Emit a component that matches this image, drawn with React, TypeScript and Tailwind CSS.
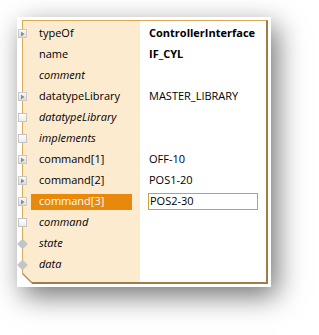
import React from "react";

type Icon = "expand" | "box" | "diamond" | "none";

type Row = {
  label: string;
  value?: string;
  icon: Icon;
  italic?: boolean;
  bold?: boolean;
  selected?: boolean;
};

const ROWS: Row[] = [
  { label: "typeOf", value: "ControllerInterface", icon: "expand", bold: true },
  { label: "name", value: "IF_CYL", icon: "none", bold: true },
  { label: "comment", icon: "none", italic: true },
  { label: "datatypeLibrary", value: "MASTER_LIBRARY", icon: "expand" },
  { label: "datatypeLibrary", icon: "box", italic: true },
  { label: "implements", icon: "box", italic: true },
  { label: "command[1]", value: "OFF-10", icon: "expand" },
  { label: "command[2]", value: "POS1-20", icon: "expand" },
  { label: "command[3]", value: "POS2-30", icon: "expand", selected: true },
  { label: "command", icon: "box", italic: true },
  { label: "state", icon: "diamond", italic: true },
  { label: "data", icon: "diamond", italic: true },
];

const RowIcon = ({ icon }: { icon: Icon }) => {
  if (icon === "expand") {
    return (
      <div className="flex h-[9px] w-[9px] items-center justify-center border border-[#c9c9c9] bg-gradient-to-b from-[#fafafa] to-[#dedede]">
        <svg width="5" height="6" viewBox="0 0 5 6">
          <path d="M1 0.5 L4.5 3 L1 5.5 Z" fill="#8c8c8c" />
        </svg>
      </div>
    );
  }
  if (icon === "box") {
    return (
      <div className="h-[9px] w-[9px] border border-[#c4c4c4] bg-gradient-to-b from-white to-[#ececec]" />
    );
  }
  if (icon === "diamond") {
    return (
      <svg width="12" height="12" viewBox="0 0 12 12">
        <path d="M6 0.5 L11.5 6 L6 11.5 L0.5 6 Z" fill="#c4c4c4" stroke="#b8b8b8" strokeWidth="0.5" />
      </svg>
    );
  }
  return <div className="h-[9px] w-[9px]" />;
};

const App = () => {
  return (
    <div
      className="h-[335px] w-[319px] overflow-hidden bg-white pl-[17px] pt-[17px] text-[11px] text-black"
      style={{ fontFamily: '"Open Sans", "Noto Sans", sans-serif' }}
    >
      <div className="h-[270px] w-[254px] bg-white pl-[5px] pt-[3px] shadow-[6px_9px_26px_rgba(0,0,0,0.55)]">
        <div className="relative flex h-[264px] w-[246px] border-l border-t border-r-2 border-b-2 border-l-[#d9a957] border-t-[#d9a957] border-r-[#9f7d47] border-b-[#9f7d47] shadow-[inset_-1px_-1px_0_#f6d27a]">
          <div className="flex w-[117px] flex-col bg-[#fdebd0] pt-[2px]">
            {ROWS.map((row, i) => (
              <div key={i} className="flex h-[21px] items-center">
                <div className="ml-[-6px] flex w-[11px] justify-center">
                  <RowIcon icon={row.icon} />
                </div>
                <div
                  className={`ml-[3px] flex h-[16px] w-[101px] items-center pl-[8px] ${
                    row.selected ? "bg-[#e8890c] text-white" : ""
                  } ${row.italic ? "italic" : ""}`}
                >
                  {row.label}
                </div>
              </div>
            ))}
          </div>
          <div className="flex flex-1 flex-col bg-white pt-[2px]">
            {ROWS.map((row, i) => (
              <div key={i} className="flex h-[21px] items-center pl-[8px]">
                {row.selected ? (
                  <div className="flex h-[17px] w-[110px] items-center border border-[#c9a04a] pl-[1px]">
                    {row.value}
                  </div>
                ) : (
                  <span className={`pl-[1px] ${row.bold ? "font-bold" : ""}`}>{row.value}</span>
                )}
              </div>
            ))}
          </div>
          <svg
            className="absolute bottom-[-2px] left-[-1px]"
            width="11"
            height="11"
            viewBox="0 0 11 11"
          >
            <path d="M0 0 L10 10 L10 11 L0 11 Z" fill="#ffffff" />
            <path d="M0.5 0.5 L10 10" stroke="#b08a4c" strokeWidth="1.2" />
          </svg>
        </div>
      </div>
    </div>
  );
};

export default App;
